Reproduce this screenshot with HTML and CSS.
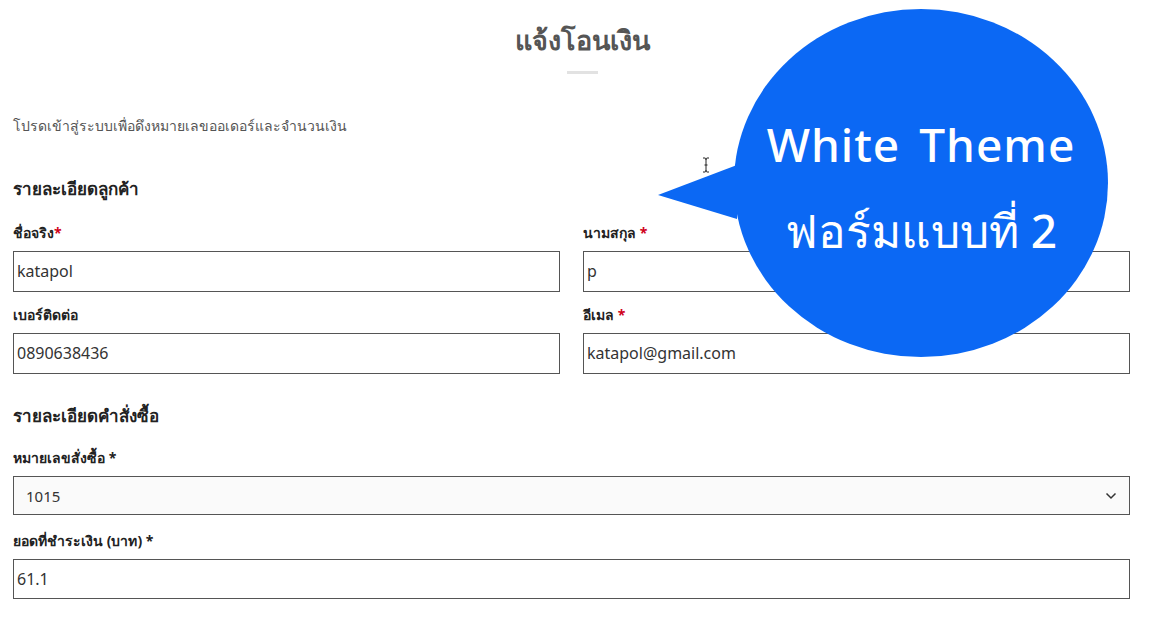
FILE: index.html
```html
<!DOCTYPE html>
<html lang="th">
<head>
<meta charset="utf-8">
<link rel="stylesheet" href="styles.css">
</head>
<body>
<div class="page">
  <h1 class="title">แจ้งโอนเงิน</h1>
  <div class="divider"></div>
  <p class="intro">โปรดเข้าสู่ระบบเพื่อดึงหมายเลขออเดอร์และจำนวนเงิน</p>

  <h2 class="section first">รายละเอียดลูกค้า</h2>
  <div class="grid">
    <div class="field">
      <label class="label">ชื่อจริง<span class="req">*</span></label>
      <div class="input">katapol</div>
    </div>
    <div class="field">
      <label class="label">นามสกุล <span class="req">*</span></label>
      <div class="input">p</div>
    </div>
    <div class="field">
      <label class="label">เบอร์ติดต่อ</label>
      <div class="input">0890638436</div>
    </div>
    <div class="field">
      <label class="label">อีเมล <span class="req">*</span></label>
      <div class="input">katapol@gmail.com</div>
    </div>
  </div>

  <h2 class="section second">รายละเอียดคำสั่งซื้อ</h2>
  <div class="field f-order">
    <label class="label">หมายเลขสั่งซื้อ *</label>
    <div class="select"><span>1015</span>
      <svg class="chev" width="12" height="8" viewBox="0 0 12 8"><path d="M1.5 1.5 L6 6 L10.5 1.5" fill="none" stroke="#333" stroke-width="1.5"/></svg>
    </div>
  </div>
  <div class="field f-amount">
    <label class="label">ยอดที่ชำระเงิน (บาท) *</label>
    <div class="input short">61.1</div>
  </div>
</div>

<svg class="cursor" width="8" height="16" viewBox="0 0 8 16"><path d="M1 1 H3 Q4 1 4 3 V13 Q4 15 3 15 H1 M7 1 H5 Q4 1 4 3 M4 13 Q4 15 5 15 H7 M2.5 8 H5.5" fill="none" stroke="#222" stroke-width="1"/></svg>

<div class="bubble">
  <svg class="bubble-shape" width="460" height="360" viewBox="0 0 460 360">
    <ellipse cx="264" cy="180" rx="187" ry="174" fill="#0b68f4"/>
    <path d="M80 162 L1 192 L80 216 Z" fill="#0b68f4"/>
  </svg>
  <div class="bubble-text">
    <div class="bt1">White Theme</div>
    <div class="bt2">ฟอร์มแบบที่ 2</div>
  </div>
</div>
</body>
</html>
```
FILE: styles.css
```css
* { box-sizing: border-box; }
html, body { margin: 0; padding: 0; background: #fff; }
body {
  font-family: "Noto Sans", "Liberation Sans", "DejaVu Sans", sans-serif;
  color: #333;
  width: 1154px;
  height: 623px;
  overflow: hidden;
  position: relative;
}
.page {
  width: 1130px;
  padding-left: 13px;
}
.title {
  margin: 24px 0 0;
  text-align: center;
  font-size: 27px;
  line-height: 32px;
  font-weight: 700;
  color: #555;
  padding-left: 22px;
}
.divider {
  width: 31px;
  height: 3px;
  background: #e2e2e2;
  margin: 15px 0 0 554px;
}
.intro {
  margin: 42px 0 0;
  font-size: 14px;
  line-height: 20px;
  color: #555;
}
.section {
  margin: 0;
  font-size: 17px;
  line-height: 24px;
  font-weight: 700;
  color: #222;
}
.section.first { margin-top: 41px; }
.section.second { margin-top: 30px; }
.grid {
  display: grid;
  grid-template-columns: 547px 547px;
  column-gap: 23px;
  row-gap: 14px;
  margin-top: 23px;
}
.label {
  display: block;
  font-size: 14px;
  line-height: 18px;
  font-weight: 700;
  color: #222;
  margin-bottom: 9px;
}
.req { color: #d0021b; }
.input {
  height: 41px;
  border: 1px solid #555;
  background: #fff;
  font-size: 16px;
  line-height: 39px;
  padding-left: 3px;
  color: #333;
}
.input.short { height: 40px; line-height: 38px; }
.f-order { margin-top: 21px; width: 1117px; }
.f-amount { margin-top: 17px; width: 1117px; }
.select {
  height: 39px;
  border: 1px solid #555;
  background: #fafafa;
  font-size: 15px;
  padding: 0 12px;
  display: flex;
  align-items: center;
  justify-content: space-between;
  color: #333;
}
.cursor {
  position: absolute;
  left: 702px;
  top: 157px;
}
.bubble {
  position: absolute;
  left: 657px;
  top: 3px;
  width: 460px;
  height: 360px;
}
.bubble-shape {
  position: absolute;
  left: 0;
  top: 0;
}
.bubble-text {
  position: absolute;
  left: 78px;
  top: 0;
  width: 372px;
  height: 360px;
  display: flex;
  flex-direction: column;
  align-items: center;
  justify-content: center;
  gap: 26px;
  color: #fff;
  font-weight: 500;
  font-size: 46px;
  line-height: 60px;
  padding-top: 8px;
}
.bt1 { letter-spacing: 1px; word-spacing: 6px; }
```
